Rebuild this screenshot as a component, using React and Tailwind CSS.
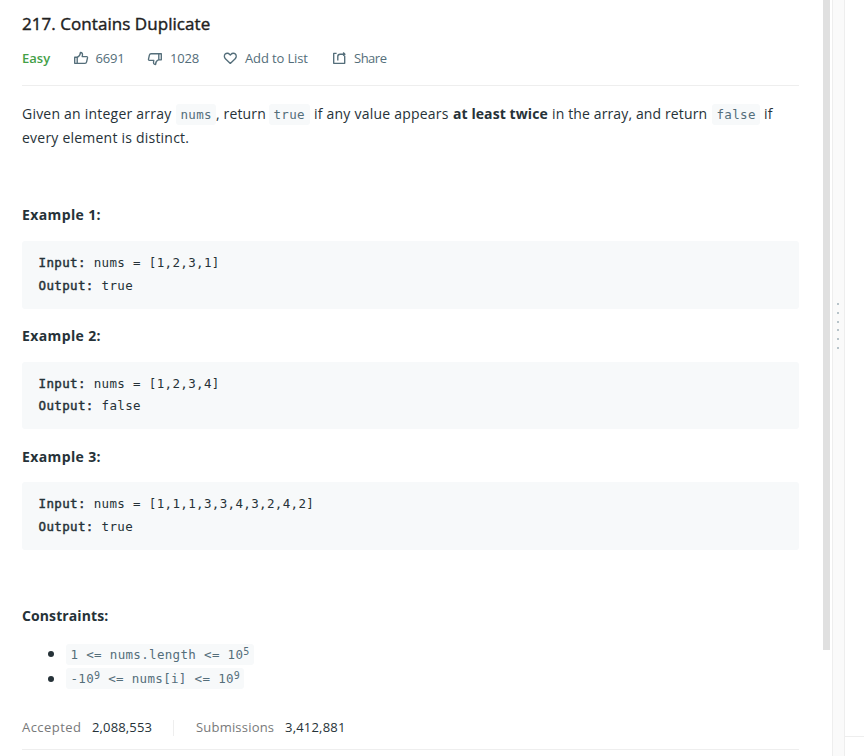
import React from "react";

const mono = "font-['DejaVu_Sans_Mono',monospace]";

function Code({ children, className = "" }) {
  return (
    <code className={`block h-[21px] shrink-0 rounded-[3px] bg-[#f7f9fa] pl-[4.5px] text-[12.5px] leading-[21px] tracking-[0.33px] whitespace-nowrap text-[#546e7a] ${mono} ${className}`}>
      {children}
    </code>
  );
}

function Strong({ children }) {
  return <span className="[-webkit-text-stroke:0.45px_currentColor]">{children}</span>;
}

function Example({ number, input, output }) {
  return (
    <section className="h-[120.6px]">
      <h2 className="h-[38px] pt-[0.4px] text-[14px] leading-[24px] font-bold tracking-[0.38px]">Example {number}:</h2>
      <pre className={`h-[67.6px] rounded-[3px] bg-[#f7f9fa] pt-[11px] pl-[16.5px] text-[12.5px] leading-[22.5px] tracking-[0.35px] ${mono}`}>
        <Strong>Input:</Strong> nums = {input}{"\n"}
        <Strong>Output:</Strong> {output}
      </pre>
    </section>
  );
}

function Icon({ children, className }) {
  return (
    <svg viewBox="0 0 16 16" fill="none" stroke="currentColor" strokeWidth="1.35" strokeLinejoin="round" className={`h-4 w-4 shrink-0 ${className}`}>
      {children}
    </svg>
  );
}

function Sup({ children }) {
  return <sup className="relative -top-[4px] align-baseline text-[10px] leading-none tracking-[0.2px]">{children}</sup>;
}

export default function App() {
  return (
    <div className="flex h-[756px] w-[864px] overflow-hidden bg-white font-['Open_Sans',sans-serif] text-[#263238]">
      <main className="w-[823px] shrink-0 pr-6 pl-[22px]">
        <h1 className="h-[46px] pt-3 text-[17px] leading-[24px] tracking-[0.05px] whitespace-nowrap text-[#212121] [-webkit-text-stroke:0.4px_currentColor]">217. Contains Duplicate</h1>
        <div className="flex h-[40px] border-b border-[#eeeeee] text-[13px] leading-[25px] whitespace-nowrap text-[#546e7a]">
          <span className="w-[51px] font-semibold text-[#43a047]">Easy</span>
          <button className="flex w-[75px] items-start tracking-[-0.2px]">
            <Icon className="mt-[4px]">
              <path d="M1.7 7.2h2.5v6.1H1.7zM4.2 7.3c2.2-.9 3.2-2.5 3.2-4.8 2 0 2.5 1.5 1.8 4.1h4.4c.8 0 1 .7.9 1.3l-.9 4c-.2.9-.7 1.4-1.6 1.4H4.2" />
            </Icon>
            <span className="ml-[6.5px]">6691</span>
          </button>
          <button className="flex w-[74px] items-start tracking-[-0.2px]">
            <Icon className="mt-[5px] -ml-px">
              <path d="M14.3 8.8h-2.5V2.7h2.5zM11.8 8.7c-2.2.9-3.2 2.5-3.2 4.8-2 0-2.5-1.5-1.8-4.1H2.4c-.8 0-1-.7-.9-1.3l.9-4c.2-.9.7-1.4 1.6-1.4h7.8" />
            </Icon>
            <span className="ml-[7px]">1028</span>
          </button>
          <button className="flex w-[109px] items-start tracking-[-0.13px]">
            <Icon className="mt-[4px]">
              <path d="M8.3 13.4 3.4 8.7C2.1 7.4 2 5.3 3.2 4.1c1.2-1.2 3.2-1.1 4.3.1l.8.9.8-.9c1.1-1.2 3.1-1.3 4.3-.1 1.2 1.2 1.1 3.3-.2 4.6z" />
            </Icon>
            <span className="ml-[7px]">Add to List</span>
          </button>
          <button className="flex items-start tracking-[-0.5px]">
            <Icon className="mt-[4px]">
              <path d="M5.6 3.3H2.7v10h11V5.8M6.8 10.5V6.4c0-1.5.8-2.2 2.3-2.2h4.7M12.2 2.5l1.7 1.7-1.7 1.6" />
            </Icon>
            <span className="ml-[7px]">Share</span>
          </button>
        </div>

        <div className="mt-4 h-[101px] text-[14px] leading-[24px] tracking-[0.22px] whitespace-nowrap">
          <p className="flex h-6">
            <span className="w-[154px]">Given an integer array</span>
            <Code className="mt-[2px] w-[40px]">nums</Code>
            <span className="w-[53px] tracking-[0.15px]">, return</span>
            <Code className="mt-[2px] w-[41px]">true</Code>
            <span className="ml-[4px] w-[139px]">if any value appears</span>
            <b className="w-[99px] tracking-[0.08px]">at least twice</b>
            <span className="w-[160px] tracking-[0.13px]">in the array, and return</span>
            <Code className="mt-[2px] w-[48px]">false</Code>
            <span className="ml-[4px]">if</span>
          </p>
          <p>every element is distinct.</p>
        </div>

        <Example number="1" input="[1,2,3,1]" output="true" />
        <Example number="2" input="[1,2,3,4]" output="false" />
        <Example number="3" input="[1,1,1,3,3,4,3,2,4,2]" output="true" />

        <h2 className="mt-[39px] h-[38px] text-[14px] leading-[24px] font-bold tracking-[0.1px]">Constraints:</h2>
        <ul className="h-[73px] text-[14px] leading-[24px]">
          <li className="flex h-[24.5px] items-center">
            <span className="mr-[12px] ml-[26px] h-[6px] w-[6px] rounded-full bg-[#263238]" />
            <Code className="w-[188px]">1 &lt;= nums.length &lt;= 10<Sup>5</Sup></Code>
          </li>
          <li className="flex h-[24.5px] items-center">
            <span className="mr-[12px] ml-[26px] h-[6px] w-[6px] rounded-full bg-[#263238]" />
            <Code className="w-[178px]">-10<Sup>9</Sup> &lt;= nums[i] &lt;= 10<Sup>9</Sup></Code>
          </li>
        </ul>
        <footer className="flex h-[35px] border-b border-[#eeeeee] text-[13px] leading-[25px] whitespace-nowrap">
          <span className="w-[70px] tracking-[0.45px] text-[#78797a]">Accepted</span>
          <span className="w-[81px] tracking-[0.15px]">2,088,553</span>
          <span className="mt-[5px] mr-[22px] h-4 w-px bg-[#eeeeee]" />
          <span className="w-[89px] tracking-[0.2px] text-[#78797a]">Submissions</span>
          <span className="tracking-[0.2px]">3,412,881</span>
        </footer>
      </main>
      <div className="h-[650px] w-[7px] shrink-0 bg-[#e0e0e0]" />
      <div className="ml-[2px] flex w-[13px] shrink-0 flex-col items-start gap-[6.8px] border-x border-[#eeeeee] bg-[#fafafa] pt-[303px] pl-[4px]">
        {[0, 1, 2, 3, 4, 5].map((dot) => (
          <span key={dot} className="h-[2px] w-[2px] shrink-0 bg-[#b8c4ca]" />
        ))}
      </div>
      <div className="h-[737px] grow border-b border-[#eeeeee]" />
    </div>
  );
}
